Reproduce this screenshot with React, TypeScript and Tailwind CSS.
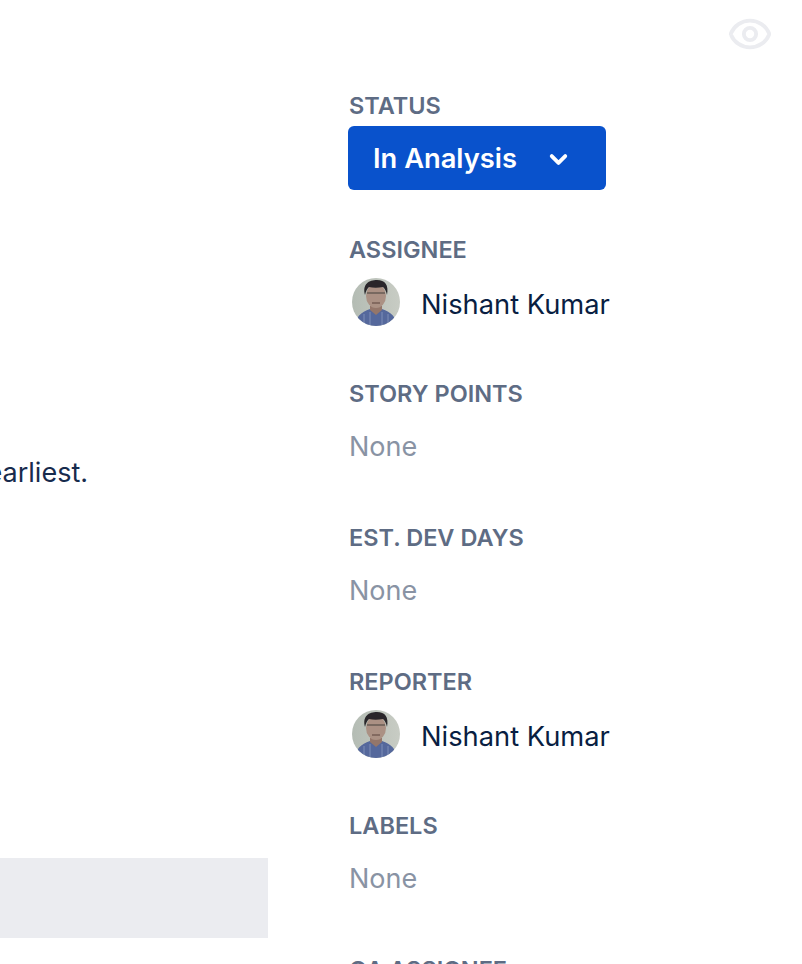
import { ChevronDown } from "lucide-react";
import type { ReactNode } from "react";

const font = { fontFamily: "Inter, sans-serif" };

function Avatar() {
  return (
    <svg viewBox="0 0 48 48" className="h-12 w-12 shrink-0 rounded-full">
      <defs>
        <filter id="soft">
          <feGaussianBlur stdDeviation="0.6" />
        </filter>
        <linearGradient id="wall" x1="0" y1="0" x2="1" y2="0">
          <stop offset="0" stopColor="#b4bcb4" />
          <stop offset="1" stopColor="#c8ccc4" />
        </linearGradient>
      </defs>
      <rect width="48" height="48" fill="url(#wall)" />
      <g filter="url(#soft)">
        <path d="M3 50c0-11 6-16 15-19l6 3 6-3c9 3 15 8 15 19z" fill="#55679c" />
        <path d="M12 36v12M18 34v14M30 34v14M36 36v12" stroke="#7f8fb8" strokeWidth="1" />
        <path d="M18 28h12v4l-6 5-6-5z" fill="#94766a" />
        <ellipse cx="24" cy="18" rx="10" ry="12" fill="#ab9184" />
        <path d="M13 17C10 6 17 2 25 2c8 0 12 5 10 15-1-4-2-6-4-8-5 1-10 1-14 0-2 2-3 4-4 8z" fill="#29282b" />
        <path d="M15 15h18" stroke="#5d5450" strokeWidth="1.3" />
        <path d="M20 25h8" stroke="#6f574e" strokeWidth="1.3" />
      </g>
    </svg>
  );
}

function Label({ children }: { children: string }) {
  return <div className="h-6 text-[23.5px] leading-[22px] font-semibold text-[#5e6c84]">{children}</div>;
}

function Section({ label, children }: { label: string; children: ReactNode }) {
  return (
    <div className="h-[144px] shrink-0">
      <Label>{label}</Label>
      {children}
    </div>
  );
}

function NoneValue() {
  return <div className="mt-[20px] text-[27px] leading-10 text-[#8993a4]">None</div>;
}

function Person({ name }: { name: string }) {
  return (
    <div className="mt-[15px] flex items-center gap-[21px] pl-[3px]">
      <Avatar />
      <span className="mt-[6px] text-[27.3px] leading-10 text-[#091e42]">{name}</span>
    </div>
  );
}

export default function App() {
  return (
    <div className="relative flex h-[964px] w-[802px] overflow-hidden bg-white" style={font}>
      <div className="flex w-[349px] shrink-0 flex-col">
        <div className="mt-[453px] flex h-10 w-[88px] justify-end overflow-hidden">
          <span className="whitespace-nowrap text-[27px] leading-10 text-[#172b4d]">earliest.</span>
        </div>
        <div className="mt-[365px] h-20 w-[268px] bg-[#ebecf0]" />
      </div>

      <div className="flex flex-col pt-[95px]">
        <Section label="STATUS">
          <button className="mt-[7px] ml-[-1px] flex h-16 w-[258px] items-center rounded-[6px] bg-[#0952cc] pt-[2px] pl-[25px] text-[27.3px] font-semibold text-white">
            In Analysis
            <ChevronDown className="ml-[28px] h-[27px] w-[27px]" strokeWidth={3.4} />
          </button>
        </Section>
        <Section label="ASSIGNEE">
          <Person name="Nishant Kumar" />
        </Section>
        <Section label="STORY POINTS">
          <NoneValue />
        </Section>
        <Section label="EST. DEV DAYS">
          <NoneValue />
        </Section>
        <Section label="REPORTER">
          <Person name="Nishant Kumar" />
        </Section>
        <Section label="LABELS">
          <NoneValue />
        </Section>
        <Section label="QA ASSIGNEE">
          <NoneValue />
        </Section>
      </div>

      <svg viewBox="0 0 24 24" className="absolute top-[11px] left-[727px] h-[46px] w-[46px]" fill="none" stroke="#ebecf0" strokeWidth="2">
        <path d="M2.06 12.35a1 1 0 0 1 0-.7 10.75 10.75 0 0 1 19.88 0 1 1 0 0 1 0 .7 10.75 10.75 0 0 1-19.88 0" />
        <circle cx="12" cy="12" r="3.2" />
      </svg>
    </div>
  );
}
